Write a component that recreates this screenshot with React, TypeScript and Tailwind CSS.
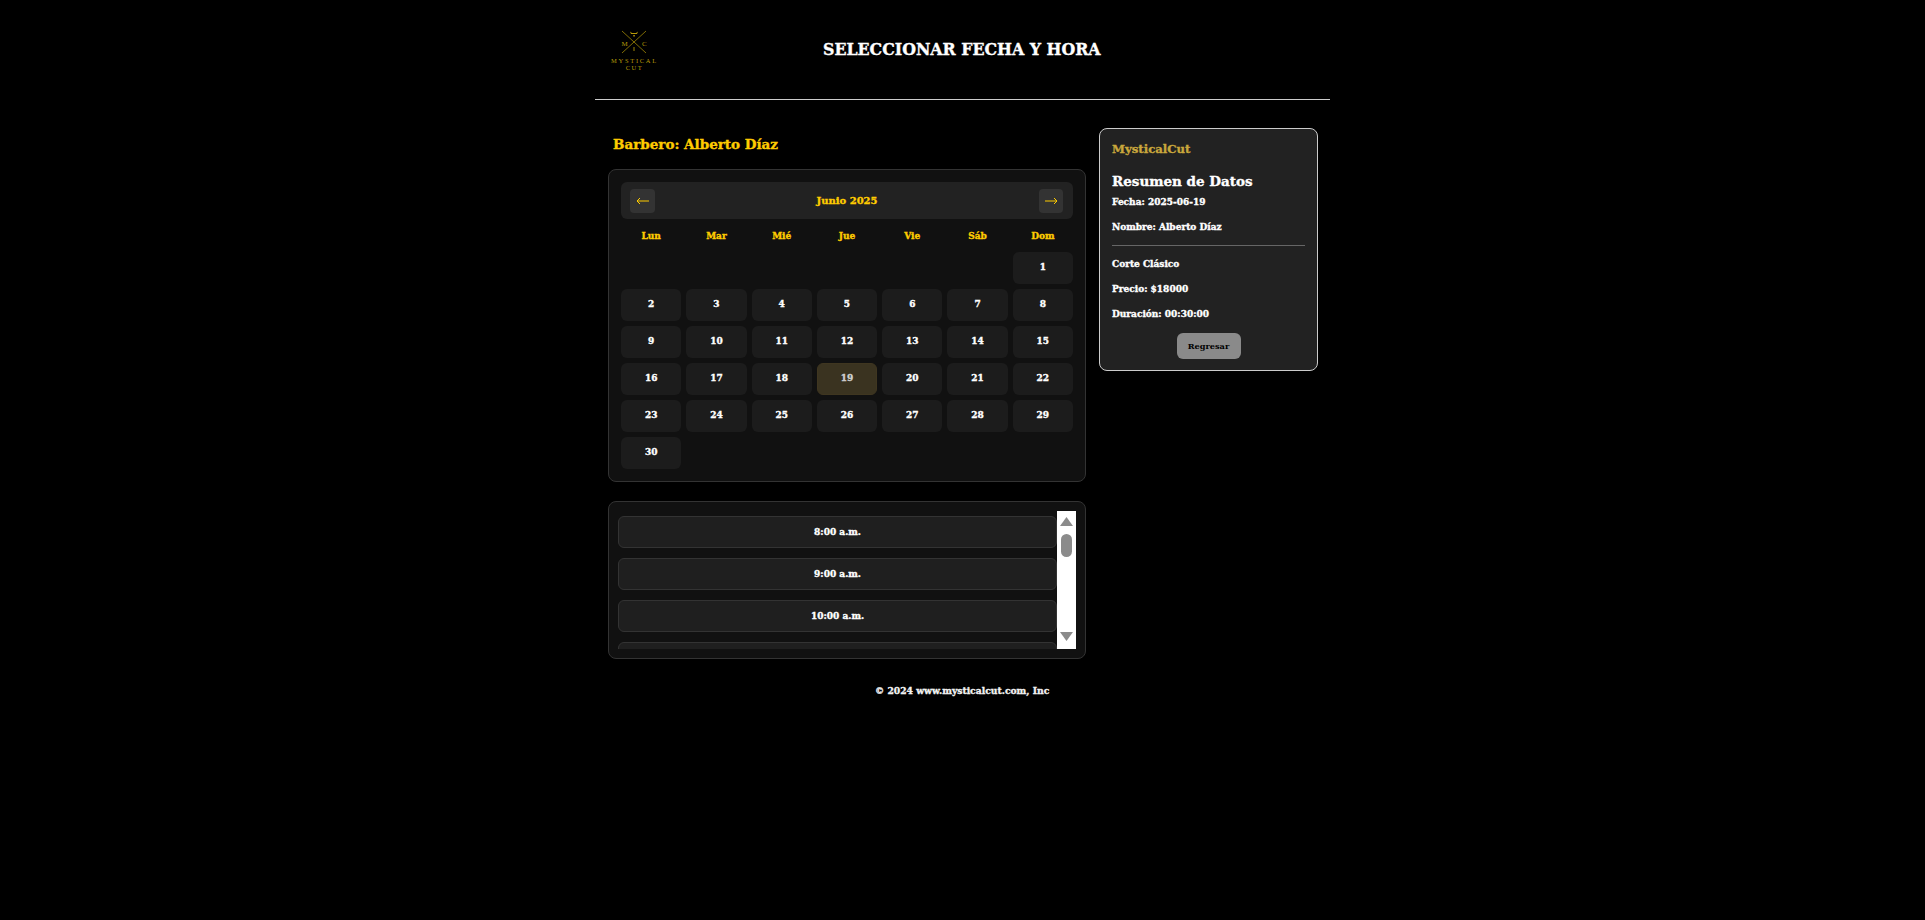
import React from "react";

const weekdays = ["Lun", "Mar", "Mié", "Jue", "Vie", "Sáb", "Dom"];
const days = Array.from({ length: 30 }, (_, i) => i + 1);
const slab = "font-['DejaVu_Serif',serif] font-bold [-webkit-text-stroke:0.35px]";

function Logo() {
  return (
    <svg width="52" height="44" viewBox="0 0 52 44" className="block" fill="none">
      <g stroke="#a08606" strokeWidth="0.8">
        <line x1="12" y1="2" x2="36" y2="24" />
        <line x1="36" y1="2" x2="12" y2="24" />
      </g>
      <path d="M20 2.500 L21 5 H27 L28 2.500 L26 4 H22 Z" fill="#b89a08" />
      <rect x="23.300" y="6" width="1.500" height="1.500" fill="#b89a08" />
      <rect x="23.500" y="18" width="1" height="4" fill="#a08606" />
      <text x="11.500" y="16.500" fontSize="7" fill="#b89a08" fontFamily="'Liberation Serif',serif">M</text>
      <text x="32" y="16.500" fontSize="7" fill="#b89a08" fontFamily="'Liberation Serif',serif">C</text>
      <text x="24.500" y="34" fontSize="6.500" letterSpacing="1.700" textAnchor="middle" fill="#b89a08" fontFamily="'Liberation Serif',serif">MYSTICAL</text>
      <text x="24.500" y="40.500" fontSize="6.500" letterSpacing="1.500" textAnchor="middle" fill="#b89a08" fontFamily="'Liberation Serif',serif">CUT</text>
    </svg>
  );
}

function Calendar() {
  return (
    <div className="w-[478px] rounded-lg border border-[#333] bg-[#111] p-3">
      <div className="flex h-[37px] items-center justify-between rounded-md bg-[#222] pl-[9px] pr-[10px]">
        <button className="flex h-6 w-[25px] items-center justify-center rounded bg-[#333] text-[#ffcc00]">
          <svg width="14" height="8" viewBox="0 0 14 8" fill="none" stroke="currentColor" strokeWidth="1"><path d="M13 4H1M4 1L1 4l3 3" /></svg>
        </button>
        <span className={`${slab} text-[10px] text-[#ffcc00]`}>Junio 2025</span>
        <button className="flex h-6 w-[24px] items-center justify-center rounded bg-[#333] text-[#ffcc00]">
          <svg width="14" height="8" viewBox="0 0 14 8" fill="none" stroke="currentColor" strokeWidth="1"><path d="M1 4h12M10 1l3 3-3 3" /></svg>
        </button>
      </div>
      <div className="mt-[5px] grid grid-cols-7 gap-[5px]">
        {weekdays.map((d) => (
          <div key={d} className={`${slab} flex h-[23px] items-center justify-center pt-[2px] text-[9px] text-[#ffcc00]`}>{d}</div>
        ))}
        {Array.from({ length: 6 }).map((_, i) => <div key={`e${i}`} />)}
        {days.map((d) => (
          <div
            key={d}
            className={`${slab} flex h-8 items-center justify-center rounded-md text-[9px] ${
              d === 19 ? "border border-[#3f3620] bg-[#3a3320] text-[#cfcfcf]" : "bg-[#1c1c1c] text-white"
            }`}
          >
            {d}
          </div>
        ))}
      </div>
    </div>
  );
}

function Times() {
  return (
    <div className="mt-[19px] w-[478px] rounded-lg border border-[#333] bg-[#111] p-[9px]">
      <div className="flex h-[138px] overflow-hidden">
        <div className="flex min-w-0 flex-1 flex-col gap-[10px] overflow-hidden pt-[5px]">
          {["8:00 a.m.", "9:00 a.m.", "10:00 a.m.", ""].map((t, i) => (
            <div key={i} className={`${slab} flex h-8 shrink-0 items-center justify-center rounded-md border border-[#333] bg-[#1f1f1f] pt-[2px] text-[9px] text-white`}>
              {t}
            </div>
          ))}
        </div>
        <div className="flex w-[19px] shrink-0 flex-col items-center bg-white pt-[6px]">
          <svg width="13" height="10" viewBox="0 0 13 10" fill="#8b8b8b"><path d="M6.500 0L13 9H0z" /></svg>
          <div className="mt-[7px] h-[23px] w-[11px] rounded-full bg-[#8b8b8b]" />
          <svg width="13" height="10" viewBox="0 0 13 10" fill="#8b8b8b" className="mt-[75px]"><path d="M0 0h13L6.500 9z" /></svg>
        </div>
      </div>
    </div>
  );
}

function Summary() {
  const row = `${slab} text-[9px] leading-[10px] text-white`;
  return (
    <aside className="ml-[13px] mt-[28px] h-[243px] w-[219px] rounded-lg border border-[#ccc] bg-[#222] px-[12px] pt-[13px]">
      <div className={`${slab} text-[11.700px] leading-[14px] text-[#c9a73c]`}>MysticalCut</div>
      <div className={`${slab} mt-[16px] text-[13.500px] leading-[18px] text-white`}>Resumen de Datos</div>
      <div className={`${row} mt-[7px]`}>Fecha: 2025-06-19</div>
      <div className={`${row} mt-[15px]`}>Nombre: Alberto Díaz</div>
      <div className="mt-[13px] h-px bg-[#666]" />
      <div className={`${row} mt-[13px]`}>Corte Clásico</div>
      <div className={`${row} mt-[15px]`}>Precio: $18000</div>
      <div className={`${row} mt-[15px]`}>Duración: 00:30:00</div>
      <div className="mt-[14px] flex justify-center">
        <button className="flex h-[26px] w-16 items-center justify-center rounded-md bg-[#8a8a8a] font-['DejaVu_Serif',serif] text-[8.200px] font-bold text-black">
          Regresar
        </button>
      </div>
    </aside>
  );
}

export default function App() {
  return (
    <div className="min-h-[920px] bg-black">
      <div className="mx-auto w-[735px]">
        <header className="flex h-[100px] border-b border-[#ccc]">
          <div className="ml-[15px] mt-[29px]"><Logo /></div>
          <h1 className={`${slab} ml-[161px] mt-[40px] h-min text-[15.800px] leading-5 text-white`}>SELECCIONAR FECHA Y HORA</h1>
        </header>
        <div className="flex pl-[13px]">
          <main>
            <h2 className={`${slab} ml-[5px] mt-[36px] text-[13.500px] leading-[17px] text-[#ffcc00]`}>Barbero: Alberto Díaz</h2>
            <div className="mt-[16px]"><Calendar /></div>
            <Times />
          </main>
          <Summary />
        </div>
        <footer className={`${slab} ml-[280px] mt-[26px] text-[9.200px] leading-3 text-[#f2f2f2]`}>© 2024 www.mysticalcut.com, Inc</footer>
      </div>
    </div>
  );
}
